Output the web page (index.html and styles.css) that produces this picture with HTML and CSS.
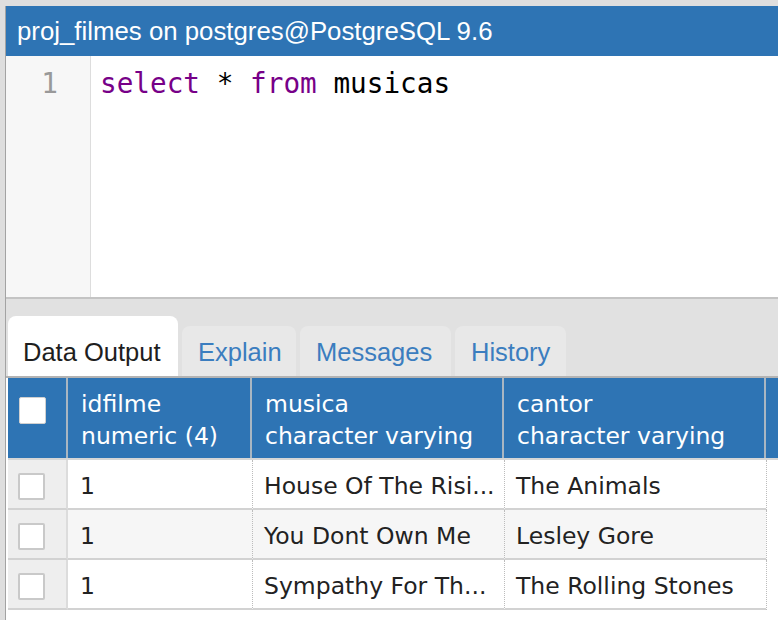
FILE: index.html
```html
<!DOCTYPE html>
<html>
<head>
<meta charset="utf-8">
<link rel="stylesheet" href="styles.css">
</head>
<body>
<div class="app">
  <div class="title">proj_filmes on postgres@PostgreSQL 9.6</div>
  <div class="editor">
    <div class="gutter"><div class="ln">1</div></div>
    <div class="code"><span class="kw">select</span> * <span class="kw">from</span> musicas</div>
  </div>
  <div class="tabbar">
    <div class="tab active t-data">Data Output</div>
    <div class="tab t-explain">Explain</div>
    <div class="tab t-messages">Messages</div>
    <div class="tab t-history">History</div>
  </div>
  <div class="grid">
    <div class="hrow">
      <div class="hcell chk"><span class="box hbox"></span></div>
      <div class="hcell c1"><div>idfilme</div><div>numeric (4)</div></div>
      <div class="hcell c2"><div>musica</div><div>character varying</div></div>
      <div class="hcell c3"><div>cantor</div><div>character varying</div></div>
      <div class="hcell rest"></div>
    </div>
    <div class="row">
      <div class="cell chk"><span class="box"></span></div>
      <div class="cell c1">1</div>
      <div class="cell c2 dot">House Of The Risi...</div>
      <div class="cell c3 dot">The Animals</div>
      <div class="cell rest dot"></div>
    </div>
    <div class="row alt">
      <div class="cell chk"><span class="box"></span></div>
      <div class="cell c1">1</div>
      <div class="cell c2 dot">You Dont Own Me</div>
      <div class="cell c3 dot">Lesley Gore</div>
      <div class="cell rest dot"></div>
    </div>
    <div class="row">
      <div class="cell chk"><span class="box"></span></div>
      <div class="cell c1">1</div>
      <div class="cell c2 dot">Sympathy For Th...</div>
      <div class="cell c3 dot">The Rolling Stones</div>
      <div class="cell rest dot"></div>
    </div>
  </div>
</div>
</body>
</html>
```
FILE: styles.css
```css
html, body {
  margin: 0;
  padding: 0;
}
body {
  width: 778px;
  height: 620px;
  overflow: hidden;
  background: #dedede;
}
.app {
  margin: 6px 0 0 5px;
  border-left: 1px solid #a3a3a3;
  background: #fff;
  height: 614px;
  overflow: hidden;
}
.title {
  height: 50px;
  background: #2e74b4;
  color: #fff;
  font-family: "Liberation Sans", Arial, sans-serif;
  font-size: 25.8px;
  display: flex;
  align-items: center;
  padding-left: 11px;
  white-space: nowrap;
}
.editor {
  height: 241px;
  display: flex;
  border-bottom: 2px solid #c4c4c4;
  background: #fff;
}
.gutter {
  width: 84px;
  background: #f7f7f7;
  border-right: 1px solid #dddddd;
  flex: none;
}
.ln, .code {
  font-family: "DejaVu Sans Mono", "Liberation Mono", monospace;
  font-size: 27.7px;
  line-height: 34px;
  padding-top: 11px;
}
.ln {
  color: #999;
  text-align: right;
  padding-right: 32px;
}
.code {
  padding-left: 9px;
  color: #000;
  white-space: pre;
}
.kw {
  color: #770088;
}
.tabbar {
  height: 77px;
  background: #e1e1e1;
  border-bottom: 2px solid #b3b3b3;
  display: flex;
  align-items: flex-end;
  gap: 4px;
  padding-left: 2px;
}
.tab {
  height: 50px;
  box-sizing: border-box;
  padding: 12px 0 0 16px;
  background: #e8e8e8;
  border-radius: 8px 8px 0 0;
  font-family: "Liberation Sans", Arial, sans-serif;
  font-size: 25.5px;
  line-height: 28px;
  color: #3b7dbf;
  white-space: nowrap;
}
.t-data { width: 170px; }
.t-explain { width: 114px; }
.t-messages { width: 151px; }
.t-history { width: 111px; }
.tab.active {
  height: 60px;
  padding-top: 22px;
  padding-left: 15px;
  background: #fff;
  color: #1e1e1e;
}
.grid {
  padding-left: 2px;
  font-family: "DejaVu Sans", Verdana, sans-serif;
  font-size: 23.5px;
}
.hrow {
  display: flex;
  height: 80px;
  background: #2e74b4;
  border-bottom: 2px solid #d6d6d6;
}
.hcell {
  box-sizing: border-box;
  color: #fff;
  line-height: 32px;
  padding: 10px 0 0 13px;
  border-right: 2px solid #a9b6c2;
  white-space: nowrap;
  overflow: hidden;
}
.chk { width: 60px; flex: none; }
.c1 { width: 184px; flex: none; }
.c2 { width: 252px; flex: none; }
.c3 { width: 262px; flex: none; }
.rest { flex: 1; border-right: none; }
.hcell.chk {
  padding: 19px 0 0 11px;
}
.box {
  display: block;
  width: 27px;
  height: 27px;
  box-sizing: border-box;
  background: #fff;
  border: 2px solid #c9c9c9;
  border-radius: 2px;
}
.hbox {
  border: 1px solid #d0d0d0;
}
.row {
  display: flex;
  height: 50px;
}
.cell {
  box-sizing: border-box;
  color: #222;
  line-height: 52px;
  padding-left: 11px;
  border-bottom: 2px solid #d2d2d2;
  white-space: nowrap;
  overflow: hidden;
  background: #fff;
}
.row.alt .cell {
  background: #f6f6f6;
}
.cell.chk {
  background: #eeeeee;
  border-right: 2px solid #dcdcdc;
  padding: 13px 0 0 10px;
}
.row.alt .cell.chk {
  background: #eeeeee;
}
.cell.c1 {
  padding-left: 12px;
}
.cell.dot {
  border-left: 1px dotted #bcbcbc;
}
.cell.rest {
  background: #fff !important;
  border-bottom: none;
}
```
